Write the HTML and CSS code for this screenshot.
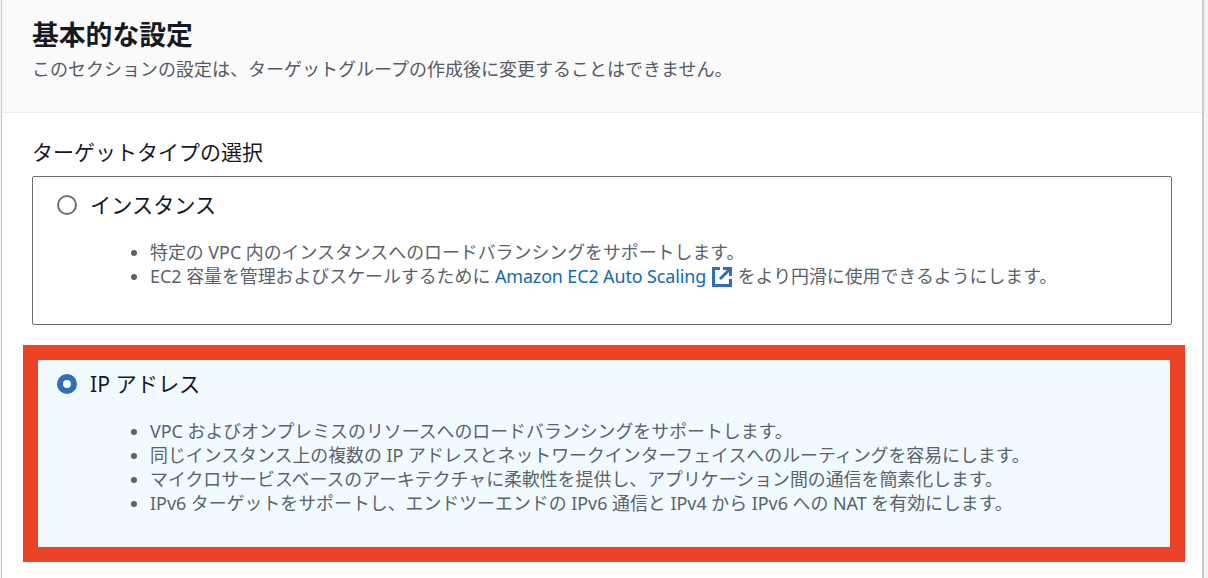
FILE: index.html
```html
<!DOCTYPE html>
<html lang="ja">

<head>
    <meta charset="UTF-8">
    <title>基本的な設定</title>
    <link rel="stylesheet" href="styles.css">
</head>

<body>
    <div class="panel">
        <div class="panel-header">
            <h2>基本的な設定</h2>
            <p>このセクションの設定は、ターゲットグループの作成後に変更することはできません。</p>
        </div>
        <div class="panel-body">
            <div class="field-label">ターゲットタイプの選択</div>
            <div class="card">
                <div class="card-title"><span class="radio"></span>インスタンス</div>
                <ul>
                    <li>特定の VPC 内のインスタンスへのロードバランシングをサポートします。</li>
                    <li>EC2 容量を管理およびスケールするために <a href="#">Amazon EC2 Auto Scaling<svg class="ext" width="22" height="22" viewBox="0 0 22 22" fill="none" stroke="#2e6fb7" stroke-width="3">
                            <path d="M9 2.5H2.5v17h17V13"/>
                            <path d="M12 2.5h7.5V10"/>
                            <path d="M19 3L9 13"/>
                        </svg></a> をより円滑に使用できるようにします。</li>
                </ul>
            </div>
            <div class="highlight">
                <div class="card selected">
                    <div class="card-title"><span class="radio checked"></span>IP アドレス</div>
                    <ul>
                        <li>VPC およびオンプレミスのリソースへのロードバランシングをサポートします。</li>
                        <li>同じインスタンス上の複数の IP アドレスとネットワークインターフェイスへのルーティングを容易にします。</li>
                        <li>マイクロサービスベースのアーキテクチャに柔軟性を提供し、アプリケーション間の通信を簡素化します。</li>
                        <li>IPv6 ターゲットをサポートし、エンドツーエンドの IPv6 通信と IPv4 から IPv6 への NAT を有効にします。</li>
                    </ul>
                </div>
            </div>
        </div>
    </div>
</body>

</html>
```

FILE: styles.css
```css
html, body {
    height: 100%;
}

body {
    margin: 0;
    overflow: hidden;
    background: #f2f3f3;
    font-family: "Noto Sans", "Noto Sans CJK JP", sans-serif;
    color: #16191f;
}

.panel {
    width: 1203px;
    height: 578px;
    margin-left: 1px;
    box-sizing: border-box;
    background: #fff;
    border-left: 1px solid #c9cccc;
    border-right: 2px solid #c9cccc;
}

.panel-header {
    height: 113px;
    box-sizing: border-box;
    padding: 16px 30px 0;
    background: #fafafa;
    border-bottom: 1px solid #eaeded;
}

h2 {
    margin: 0;
    font-size: 26.8px;
    line-height: 38px;
    font-weight: 700;
}

.panel-header p {
    margin: 3px 0 0;
    font-size: 18px;
    line-height: 24px;
    color: #545b64;
}

.panel-body {
    padding: 25px 30px 0;
}

.field-label {
    font-size: 21px;
    line-height: 28px;
    margin-bottom: 10px;
}

.card {
    height: 149px;
    box-sizing: border-box;
    border: 1px solid #687078;
    border-radius: 2px;
    padding: 14px 24px;
    background: #fff;
}

.card-title {
    display: flex;
    align-items: center;
    gap: 13px;
    font-size: 21.2px;
    line-height: 28px;
}

.radio {
    width: 20px;
    height: 20px;
    box-sizing: border-box;
    border: 2px solid #687078;
    border-radius: 50%;
    background: #fff;
}

.radio.checked {
    border: 6px solid #2e6fb7;
}

ul {
    margin: 21px 0 0;
    padding-left: 93px;
    font-size: 17.9px;
    line-height: 24px;
    color: #5b626b;
}

a {
    color: #0f6ab4;
    letter-spacing: -0.1px;
    text-decoration: none;
}

.ext {
    vertical-align: -5px;
    margin-left: 5px;
}

.highlight {
    margin: 20px 0 0 -9px;
    width: 1162px;
    height: 217px;
    box-sizing: border-box;
    border: 15px solid #ec4225;
}

.highlight .card {
    width: 100%;
    height: 100%;
    border: 0;
    border-radius: 0;
    background: #f1faff;
    padding: 10px 19px;
}
```
